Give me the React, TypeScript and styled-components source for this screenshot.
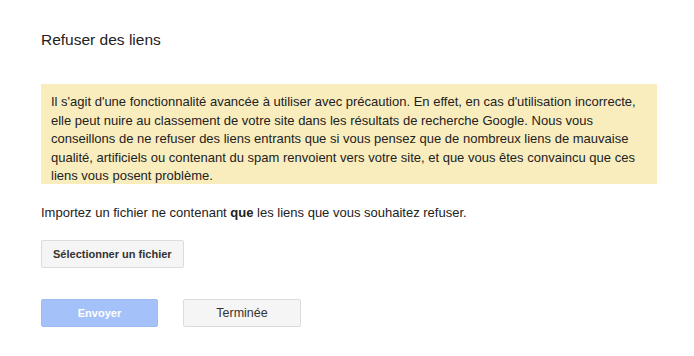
import React from 'react'
import styled, { createGlobalStyle } from 'styled-components'

const Global = createGlobalStyle`
  body {
    margin: 0;
    background: #ffffff;
    font-family: "Liberation Sans", Arial, sans-serif;
    color: #222222;
  }
`

const Page = styled.div`
  width: 694px;
  height: 356px;
  box-sizing: border-box;
  padding: 30px 37px 0 41px;
`

const Title = styled.h1`
  margin: 0;
  font-size: 15.5px;
  line-height: 20px;
  font-weight: normal;
  color: #222222;
`

const Warning = styled.div`
  margin-top: 34px;
  height: 100px;
  box-sizing: border-box;
  padding: 9px 20px 0 10px;
  background: #f9edbe;
  font-size: 13px;
  line-height: 18.5px;
  color: #222222;
`

const Hint = styled.p`
  margin: 20px 0 0;
  font-size: 13px;
  line-height: 18px;
  color: #222222;
  b {
    font-weight: bold;
  }
`

const Button = styled.button<{ $primary?: boolean; $width?: number; $light?: boolean }>`
  height: 28px;
  box-sizing: border-box;
  ${p => (p.$width ? `width: ${p.$width}px;` : 'padding: 0 11px;')}
  border-radius: 2px;
  font-family: "Liberation Sans", Arial, sans-serif;
  font-size: ${p => (p.$light ? '12.5px' : '11px')};
  font-weight: ${p => (p.$light ? 'normal' : 'bold')};
  border: 1px solid ${p => (p.$primary ? '#9dbcf3' : '#dcdcdc')};
  background: ${p => (p.$primary ? '#a4c2f9' : '#f5f5f5')};
  color: ${p => (p.$primary ? '#ffffff' : '#333333')};
  cursor: pointer;
`

const FileRow = styled.div`
  margin-top: 18px;
`

const Actions = styled.div`
  margin-top: 31px;
  display: flex;
  gap: 25px;
`

export default function App () {
  return (
    <Page>
      <Global />
      <Title>Refuser des liens</Title>
      <Warning>
        Il s'agit d'une fonctionnalité avancée à utiliser avec précaution. En effet, en cas d'utilisation incorrecte,
        elle peut nuire au classement de votre site dans les résultats de recherche Google. Nous vous
        conseillons de ne refuser des liens entrants que si vous pensez que de nombreux liens de mauvaise
        qualité, artificiels ou contenant du spam renvoient vers votre site, et que vous êtes convaincu que ces
        liens vous posent problème.
      </Warning>
      <Hint>
        Importez un fichier ne contenant <b>que</b> les liens que vous souhaitez refuser.
      </Hint>
      <FileRow>
        <Button>Sélectionner un fichier</Button>
      </FileRow>
      <Actions>
        <Button $primary $width={117} disabled>Envoyer</Button>
        <Button $light $width={118}>Terminée</Button>
      </Actions>
    </Page>
  )
}
